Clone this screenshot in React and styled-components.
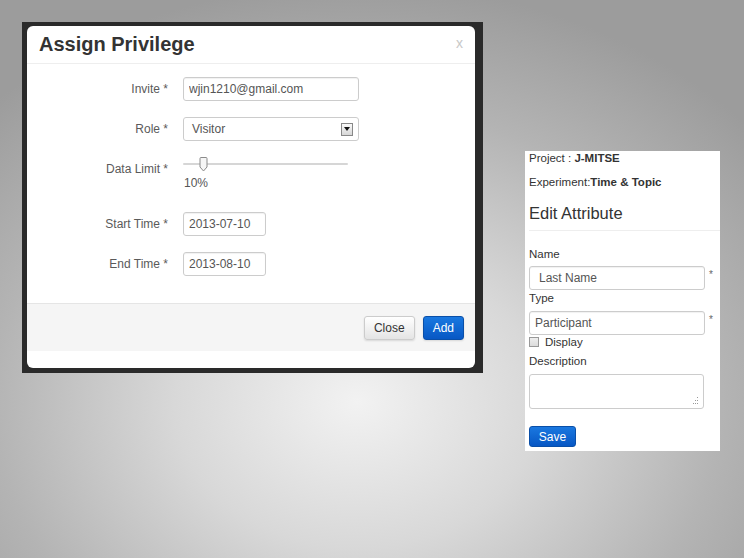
import React from 'react';
import styled, { createGlobalStyle } from 'styled-components';

const GlobalStyle = createGlobalStyle`
  html, body { margin: 0; padding: 0; }
  body { font-family: "Liberation Sans", Arial, sans-serif; }
  * { box-sizing: border-box; }
`;

const Slide = styled.div`
  width: 744px;
  height: 558px;
  overflow: hidden;
  display: flex;
  align-items: flex-start;
  padding: 22px 0 0 22px;
  background: radial-gradient(ellipse 70% 75% at 48% 72%, #f2f2f2 0%, #d8d8d8 35%, #b4b4b4 70%, #9c9c9c 100%);
`;

const Frame = styled.div`
  width: 461px;
  height: 351px;
  background: #2a2a2a;
  padding: 4px 8px 5px 5px;
`;

const Modal = styled.div`
  height: 100%;
  background: #fff;
  border-radius: 6px;
  display: flex;
  flex-direction: column;
  overflow: hidden;
`;

const ModalHeader = styled.div`
  height: 38px;
  border-bottom: 1px solid #eee;
  display: flex;
  align-items: center;
  justify-content: space-between;
  padding: 0 12px 0 12px;
`;

const Title = styled.h3`
  margin: 0;
  font-size: 20px;
  font-weight: 700;
  color: #333;
`;

const CloseX = styled.span`
  font-size: 14px;
  color: #c8c8c8;
  margin-top: -4px;
`;

const ModalBody = styled.div`
  flex: 1;
  padding: 13px 0 0 0;
`;

const FormRow = styled.div`
  display: grid;
  grid-template-columns: 141px 176px;
  column-gap: 15px;
  align-items: ${({ $top }) => ($top ? 'start' : 'center')};
  margin-bottom: ${({ $gap }) => $gap}px;
`;

const Label = styled.label`
  text-align: right;
  font-size: 12px;
  color: #5a5a5a;
  padding-top: ${({ $pt }) => $pt || 0}px;
`;

const TextInput = styled.input`
  width: ${({ $w }) => $w}px;
  height: 24px;
  border: 1px solid #ccc;
  border-radius: 3px;
  box-shadow: inset 0 1px 1px rgba(0, 0, 0, 0.06);
  padding: 0 ${({ $pl }) => $pl || 5}px;
  font-family: "Liberation Sans", Arial, sans-serif;
  font-size: 12px;
  color: #555;
  background: #fff;
  outline: none;
`;

const SelectBox = styled.div`
  width: 176px;
  height: 24px;
  border: 1px solid #ccc;
  border-radius: 3px;
  display: flex;
  align-items: center;
  justify-content: space-between;
  padding: 0 5px 0 8px;
  font-size: 12px;
  color: #555;
`;

const ArrowBox = styled.span`
  width: 12px;
  height: 13px;
  border: 1px solid #888;
  background: linear-gradient(#fafafa, #d6d6d6);
  display: flex;
  align-items: center;
  justify-content: center;
`;

const SliderWrap = styled.div`
  display: flex;
  flex-direction: column;
`;

const Track = styled.div`
  position: relative;
  width: 165px;
  height: 14px;
  &::before {
    content: '';
    position: absolute;
    left: 0;
    right: 0;
    top: 6px;
    height: 2px;
    background: #d6d6d6;
    border-radius: 1px;
  }
`;

const Thumb = styled.svg`
  position: absolute;
  left: 16px;
  top: 0;
`;

const SliderValue = styled.span`
  font-size: 12px;
  color: #555;
  margin-top: 5px;
  padding-left: 1px;
`;

const ModalFooter = styled.div`
  height: 48px;
  margin-bottom: 17px;
  background: #f5f5f5;
  border-top: 1px solid #e5e5e5;
  display: flex;
  align-items: center;
  justify-content: flex-end;
  gap: 8px;
  padding: 0 11px 0 0;
`;

const Btn = styled.button`
  height: 24px;
  padding: 0 ${({ $px }) => $px}px;
  border-radius: 3px;
  font-family: "Liberation Sans", Arial, sans-serif;
  font-size: 12px;
  cursor: pointer;
  border: 1px solid ${({ $primary }) => ($primary ? '#0a4fa8' : '#ccc')};
  color: ${({ $primary }) => ($primary ? '#fff' : '#333')};
  background: ${({ $primary }) =>
    $primary ? 'linear-gradient(#1a78e0, #0757c4)' : 'linear-gradient(#fff, #e4e4e4)'};
  box-shadow: 0 1px 2px rgba(0, 0, 0, 0.12);
`;

const Side = styled.div`
  width: 195px;
  height: 300px;
  margin: 129px 0 0 42px;
  background: #fff;
  padding: 0 0 0 4px;
  display: flex;
  flex-direction: column;
  color: #333;
`;

const InfoLine = styled.div`
  font-size: 11.5px;
  line-height: 14px;
  margin-top: ${({ $mt }) => $mt}px;
  b { font-weight: 700; }
`;

const SideTitle = styled.h4`
  margin: 14px 0 0 0;
  font-size: 16.5px;
  font-weight: 400;
  line-height: 20px;
  color: #333;
  padding-bottom: 7px;
  border-bottom: 1px solid #eee;
`;

const FieldLabel = styled.div`
  font-size: 11.5px;
  line-height: 14px;
  margin-top: ${({ $mt }) => $mt}px;
`;

const FieldRow = styled.div`
  display: flex;
  align-items: flex-start;
  gap: 4px;
  margin-top: ${({ $mt }) => $mt}px;
`;

const Req = styled.span`
  font-size: 10px;
  color: #666;
  margin-top: 3px;
`;

const CheckRow = styled.div`
  display: flex;
  align-items: center;
  gap: 6px;
  font-size: 11.5px;
  margin-top: 1px;
`;

const Box = styled.span`
  width: 10px;
  height: 10px;
  border: 1px solid #999;
  background: linear-gradient(#eee, #dcdcdc);
`;

const TextArea = styled.div`
  position: relative;
  width: 175px;
  height: 35px;
  border: 1px solid #ccc;
  border-radius: 3px;
  margin-top: 6px;
`;

const Grip = styled.svg`
  position: absolute;
  right: 4px;
  bottom: 3px;
`;

const SaveBtn = styled.button`
  align-self: flex-start;
  width: 47px;
  height: 21px;
  margin-top: 17px;
  border-radius: 3px;
  border: 1px solid #0a4fa8;
  background: linear-gradient(#1a78e0, #0757c4);
  color: #fff;
  font-family: "Liberation Sans", Arial, sans-serif;
  font-size: 12px;
  padding: 0;
`;

export default function App() {
  return (
    <>
      <GlobalStyle />
      <Slide>
        <Frame>
          <Modal>
            <ModalHeader>
              <Title>Assign Privilege</Title>
              <CloseX>x</CloseX>
            </ModalHeader>
            <ModalBody>
              <FormRow $gap={16}>
                <Label>Invite *</Label>
                <TextInput $w={176} defaultValue="wjin1210@gmail.com" readOnly />
              </FormRow>
              <FormRow $gap={16}>
                <Label>Role *</Label>
                <SelectBox>
                  Visitor
                  <ArrowBox>
                    <svg width="6" height="4" viewBox="0 0 6 4">
                      <path d="M0 0 L6 0 L3 4 Z" fill="#111" />
                    </svg>
                  </ArrowBox>
                </SelectBox>
              </FormRow>
              <FormRow $gap={22} $top>
                <Label $pt={5}>Data Limit *</Label>
                <SliderWrap>
                  <Track>
                    <Thumb width="9" height="15" viewBox="0 0 9 15">
                      <path d="M1 1.5 Q1 0.5 2 0.5 L7 0.5 Q8 0.5 8 1.5 L8 10 L4.5 14 L1 10 Z" fill="#f6f6f6" stroke="#8a8a8a" strokeWidth="1" />
                    </Thumb>
                  </Track>
                  <SliderValue>10%</SliderValue>
                </SliderWrap>
              </FormRow>
              <FormRow $gap={16}>
                <Label>Start Time *</Label>
                <TextInput $w={83} defaultValue="2013-07-10" readOnly />
              </FormRow>
              <FormRow $gap={0}>
                <Label>End Time *</Label>
                <TextInput $w={83} defaultValue="2013-08-10" readOnly />
              </FormRow>
            </ModalBody>
            <ModalFooter>
              <Btn $px={9}>Close</Btn>
              <Btn $px={9} $primary>Add</Btn>
            </ModalFooter>
          </Modal>
        </Frame>

        <Side>
          <InfoLine $mt={0}>Project : <b>J-MITSE</b></InfoLine>
          <InfoLine $mt={10}>Experiment:<b>Time &amp; Topic</b></InfoLine>
          <SideTitle>Edit Attribute</SideTitle>
          <FieldLabel $mt={16}>Name</FieldLabel>
          <FieldRow $mt={5}>
            <TextInput $w={176} $pl={9} defaultValue="Last Name" readOnly />
            <Req>*</Req>
          </FieldRow>
          <FieldLabel $mt={1}>Type</FieldLabel>
          <FieldRow $mt={6}>
            <TextInput $w={176} defaultValue="Participant" readOnly />
            <Req>*</Req>
          </FieldRow>
          <CheckRow>
            <Box />
            Display
          </CheckRow>
          <FieldLabel $mt={6}>Description</FieldLabel>
          <TextArea>
            <Grip width="8" height="8" viewBox="0 0 8 8">
              <g fill="#999">
                <rect x="6" y="0" width="1" height="1" />
                <rect x="4" y="3" width="1" height="1" />
                <rect x="6" y="3" width="1" height="1" />
                <rect x="2" y="6" width="1" height="1" />
                <rect x="4" y="6" width="1" height="1" />
                <rect x="6" y="6" width="1" height="1" />
              </g>
            </Grip>
          </TextArea>
          <SaveBtn>Save</SaveBtn>
        </Side>
      </Slide>
    </>
  );
}
